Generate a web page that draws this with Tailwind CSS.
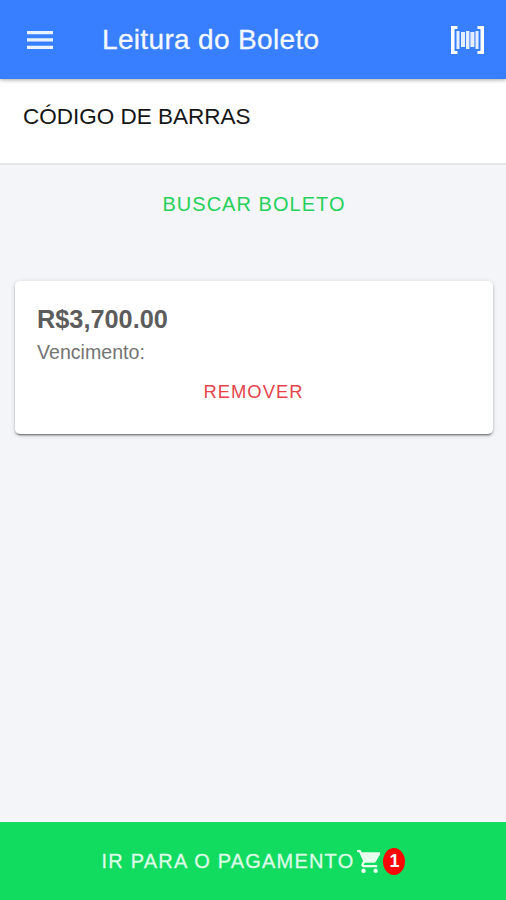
<!DOCTYPE html>
<html lang="pt-BR">
<head>
    <meta charset="UTF-8"/>
    <meta name="viewport" content="width=device-width, initial-scale=1.0"/>
    <title>Leitura do Boleto</title>
    <script src="https://cdn.jsdelivr.net/npm/@tailwindcss/browser@4"></script>
</head>
<body class="h-screen flex flex-col overflow-hidden bg-[#f4f5f9] font-['Liberation_Sans',Arial,sans-serif]">
<header class="relative h-[79px] shrink-0 flex items-center bg-[#387fff] text-white pl-[27px] pr-[22px] shadow-[0_1px_4px_rgba(0,0,0,0.35)]">
    <button aria-label="Menu">
        <svg class="w-[26px] h-[18px]" viewBox="0 0 26 18" fill="#e9f3ff">
            <path d="M0 0h26v3.300H0zM0 7.300h26v3.300H0zM0 14.700h26v3.300H0z"/>
        </svg>
    </button>
    <h1 class="ml-[49px] pt-px text-[28px] leading-8 tracking-[0.012em] flex-1 whitespace-nowrap text-[#f2f8ff] [-webkit-text-stroke:0.3px_#f2f8ff]">Leitura do Boleto</h1>
    <button aria-label="Ler código de barras">
        <svg class="w-[33px] h-7" viewBox="0 0 33 28" fill="#fff">
            <path d="M0 0h6.500v3H3.500v22h3v3H0zM33 0h-6.500v3h3v22h-3v3H33z"/>
            <path fill="#e6efff" d="M5.500 5h3v18h-3zM10 6h4v15h-4zM15 5h3.400v18H15zM19.400 6h4v15h-4zM24.500 5h3v18h-3z"/>
        </svg>
    </button>
</header>

<div class="h-[86px] shrink-0 bg-white border-b-2 border-[#e4e5e7] pl-[23px] pt-6">
    <label class="block text-[22.5px] leading-7 text-[#151515]">CÓDIGO DE BARRAS</label>
</div>

<main class="flex-1 px-[15px]">
    <button class="block w-full mt-[23px] pl-0.5 text-xl leading-8 tracking-[0.052em] text-[#25d159]">BUSCAR BOLETO</button>

    <div class="mt-[61px] mr-[-2px] h-[153px] bg-white rounded-[5px] pl-[22px] pr-[23px] pt-[22px] shadow-[0_3px_1px_-2px_rgba(0,0,0,0.3),0_2px_2px_rgba(0,0,0,0.2),0_1px_5px_rgba(0,0,0,0.16)]">
        <h2 class="text-[25.3px] leading-8 font-bold text-[#5c5c5c]">R$3,700.00</h2>
        <p class="mt-[3px] text-[19.6px] leading-7 text-[#747474]">Vencimento:</p>
        <button class="block w-full mt-3.5 text-[18.4px] leading-6 tracking-[0.055em] text-[#e5444c]">REMOVER</button>
    </div>
</main>

<footer class="h-[78px] shrink-0 flex items-center justify-center pl-px bg-[#12dc60]">
    <span class="text-xl leading-8 tracking-[0.06em] text-[#dcfbe7] [-webkit-text-stroke:0.3px_#dcfbe7]">IR PARA O PAGAMENTO</span>
    <svg class="ml-[3px] w-[23px] h-[23px]" viewBox="1 2 21 20" preserveAspectRatio="none" fill="#e8fff0">
        <path d="M7 18c-1.100 0-1.990.9-1.990 2S5.900 22 7 22s2-.9 2-2-.9-2-2-2zM1 2v2h2l3.600 7.590-1.350 2.450c-.16.28-.25.61-.25.960 0 1.100.9 2 2 2h12.500v-2H7.420c-.14 0-.25-.11-.25-.25l.03-.12.900-1.630h8.450c.75 0 1.410-.41 1.750-1.030L22 6V4H5.210l-.94-2H1zm17 16c-1.100 0-1.990.9-1.990 2s.89 2 1.990 2 2-.9 2-2-.9-2-2-2z"/>
    </svg>
    <span class="ml-[3px] w-[22px] h-[27px] rounded-[50%] flex items-center justify-center bg-[#fb0505] text-white text-lg leading-none font-bold">1</span>
</footer>
</body>
</html>
